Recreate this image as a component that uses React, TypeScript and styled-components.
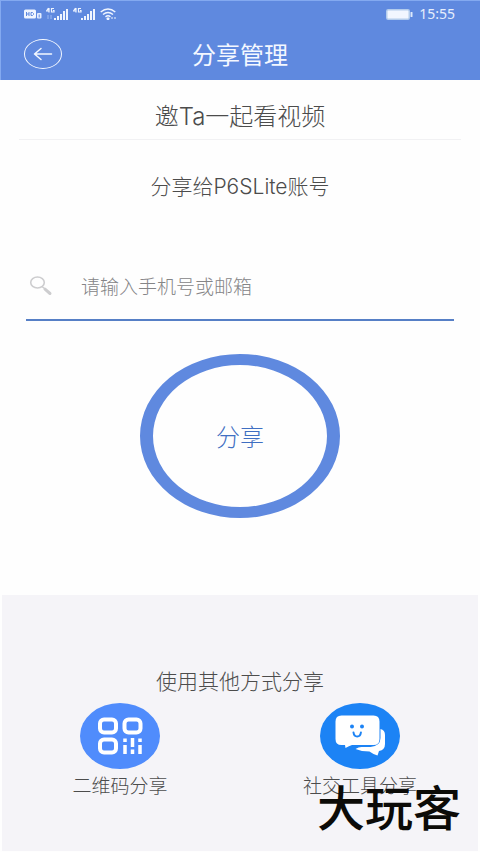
import React, { useState } from "react";
import styled, { createGlobalStyle } from "styled-components";

const blue = "#5f89df";

const GlobalStyle = createGlobalStyle`
  *, *::before, *::after { box-sizing: border-box; }
  body {
    margin: 0;
    background: #fefefe;
    font-family: "Noto Sans CJK SC", sans-serif;
    font-weight: 300;
    color: #4c4c4c;
  }
  button, input { font: inherit; color: inherit; }
`;

const Page = styled.div`
  position: relative;
  display: flex;
  flex-direction: column;
  min-height: 100vh;
`;

const Latin = styled.span`
  font-family: Inter, sans-serif;
  line-height: 1;
`;

const Header = styled.header`
  display: flex;
  flex-direction: column;
  height: 80px;
  background: ${blue};
  border-top: 1px solid #83a9f0;
  border-left: 1px solid #83a9f0;
  color: #f4f8ff;
`;

const StatusBar = styled.div`
  display: flex;
  justify-content: space-between;
  align-items: center;
  height: 26px;
  padding: 0 25px 0 23px;
`;

const StatusGroup = styled.div`
  display: flex;
  align-items: center;
  gap: 4px;
`;

const PowerGroup = styled(StatusGroup)`
  gap: 6px;
`;

const Clock = styled.time`
  font-family: "Noto Sans", sans-serif;
  font-size: 14px;
  line-height: 20px;
  font-weight: 400;
  color: #e6eefc;
`;

const TitleBar = styled.div`
  display: grid;
  grid-template-columns: 1fr auto 1fr;
  align-items: center;
  flex: 1;
  padding: 0 24px 0 23px;
`;

const BackButton = styled.button`
  display: flex;
  align-items: center;
  justify-content: center;
  width: 38px;
  height: 30px;
  padding: 0;
  border: 1px solid #f4f8ff;
  border-radius: 50%;
  background: none;
  cursor: pointer;
`;

const Title = styled.h1`
  margin: 0;
  font-size: 24px;
  line-height: 32px;
  font-weight: 400;
`;

const Main = styled.main`
  display: flex;
  flex-direction: column;
  align-items: center;
  padding-bottom: 77px;
`;

const Invite = styled.div`
  align-self: stretch;
  margin: 0 19px;
  padding: 20px 0 9px;
  border-bottom: 1px solid #f1f1f3;
  font-size: 24px;
  line-height: 30px;
  text-align: center;
`;

const Subtitle = styled.h2`
  margin: 31px 0 0;
  font-size: 21px;
  line-height: 28px;
  font-weight: 300;
`;

const Form = styled.form`
  align-self: stretch;
  display: flex;
  flex-direction: column;
  align-items: center;
  gap: 33px;
  margin: 53px 26px 0;
`;

const Field = styled.label`
  align-self: stretch;
  display: flex;
  align-items: center;
  gap: 28px;
  height: 69px;
  padding-left: 3px;
  border-bottom: 2px solid #567fc6;
`;

const AccountInput = styled.input`
  flex: 1;
  min-width: 0;
  height: 32px;
  padding: 0;
  border: 0;
  outline: 0;
  background: none;
  font-size: 19px;
  line-height: 28px;
  &::placeholder { color: #858587; opacity: 1; }
`;

const ShareButton = styled.button`
  width: 200px;
  height: 164px;
  border: solid ${blue};
  border-width: 11px 13px;
  border-radius: 50%;
  background: none;
  color: #3f6fc2;
  font-size: 24px;
  line-height: 32px;
  cursor: pointer;
`;

const Others = styled.section`
  flex: 1;
  margin: 0 2px 1px;
  padding: 71px 0 50px;
  background: #f5f4f8;
  text-align: center;
`;

const OthersTitle = styled.h2`
  margin: 0 0 9px;
  font-size: 21px;
  line-height: 28px;
  font-weight: 300;
`;

const Options = styled.div`
  display: grid;
  grid-template-columns: 1fr 1fr;
  margin: 0 -2px;
`;

const Option = styled.button`
  display: flex;
  flex-direction: column;
  align-items: center;
  gap: 3px;
  padding: 0;
  border: 0;
  background: none;
  font-size: 19px;
  line-height: 26px;
  cursor: pointer;
`;

const Badge = styled.span<{ $color: string }>`
  display: block;
  width: 80px;
  height: 66px;
  border-radius: 50%;
  background: ${(p) => p.$color};
`;

const Watermark = styled.div`
  position: absolute;
  right: 19px;
  bottom: 21px;
  font-size: 48px;
  line-height: 52px;
  font-weight: 500;
  color: #0c0b08;
  pointer-events: none;
`;

const Signal = ({ faint }: { faint?: boolean }) => (
  <svg width="23" height="14" viewBox="0 0 23 14" fill="#f0f5ff" aria-hidden="true">
    <path d="M2.500 1L.5 4h3M3 1v4.500M8 1.500H5.500v3.500H8V3.500H7" fill="none" stroke="#f0f5ff" strokeWidth="1.200" />
    {faint && <path d="M2 8v4M5 8v4" stroke="#9db9ef" />}
    <path d="M8 11h2v2H8zM11 9h2v4h-2zM14 7h2v6h-2zM17 4h2v9h-2zM20 2h2v11h-2z" />
  </svg>
);

const HdIcon = () => (
  <svg width="18" height="10" viewBox="0 0 18 10" aria-hidden="true">
    <rect y="0.500" width="12" height="9" rx="1.500" fill="#f0f5ff" />
    <path d="M2.500 3v4M5 3v4M2.500 5H5M7 3.500v3h1.500l1-1v-1l-1-1z" fill="none" stroke={blue} />
    <rect x="13" y="4" width="4.500" height="5.500" rx="1" fill="#e4edff" />
    <path d="M15.200 5.500v3" stroke={blue} />
  </svg>
);

const WifiIcon = () => (
  <svg width="17" height="12" viewBox="0 0 17 12" fill="none" stroke="#f0f5ff" strokeWidth="1.500" aria-hidden="true">
    <path d="M.7 4Q8 -2 15.300 4M3 6.500q5-4 10 0M5.500 8.800q2.500-2 5 0" />
    <path d="M7 10h2v1.500H7zM12 9v2M15 9v2" strokeWidth="1" fill="#f0f5ff" />
  </svg>
);

const BatteryIcon = () => (
  <svg width="27" height="11" viewBox="0 0 27 11" aria-hidden="true">
    <rect x=".75" y=".75" width="22.500" height="9.500" rx="1.500" fill="#f2f6ff" stroke="#b4ccec" strokeWidth="1.500" />
    <rect x="24.500" y="3" width="2" height="5" rx=".5" fill="#dce8fb" />
  </svg>
);

const ArrowIcon = () => (
  <svg width="20" height="14" viewBox="0 0 20 14" fill="none" stroke="#f4f8ff" strokeWidth="1.500" strokeLinecap="round" strokeLinejoin="round" aria-hidden="true">
    <path d="M18.500 7H1.500M8 1.500L1.500 7 8 12.500" />
  </svg>
);

const SearchIcon = () => (
  <svg width="24" height="20" viewBox="0 0 24 20" fill="none" stroke="#cdcdcf" strokeLinecap="round" aria-hidden="true">
    <ellipse cx="8.500" cy="6.500" rx="6.800" ry="5.500" strokeWidth="1.600" />
    <path d="M13.500 11l2 1.500" strokeWidth="1.500" />
    <path d="M16 13.200l5 4.300" strokeWidth="3" />
  </svg>
);

const QrIcon = () => (
  <svg width="80" height="66" viewBox="0 0 80 66" fill="none" stroke="#fff" aria-hidden="true">
    <g strokeWidth="4">
      <rect x="20" y="16.500" width="16" height="13" rx="4" />
      <rect x="44.500" y="16.500" width="16" height="13" rx="4" />
      <rect x="20" y="36.500" width="16" height="13" rx="4" />
    </g>
    <path d="M45 35.500v3.500M45 42v9M52.500 35v9M52.500 46.500v4.500M60 35.500v3.500M60 42v9" strokeWidth="3.500" />
  </svg>
);

const ChatIcon = () => (
  <svg width="80" height="66" viewBox="0 0 80 66" aria-hidden="true">
    <path d="M60.500 26q4.500 1 4.500 6v9q0 6-6 7l-1.500 4.500q-4-1-8-4-8 0-14-2.500 3-2 6-2h9q10-1 10-9z" fill="#fff" />
    <path d="M21.500 12.500h32q6 0 6 6v17.500q0 6-6 6H32q-3 1-6.500 3l-.5-3h-3.500q-6 0-6-6V18.500q0-6 6-6z" fill="#fff" />
    <circle cx="32" cy="23.500" r="2" fill="#1c83f5" />
    <circle cx="42" cy="23.500" r="2" fill="#1c83f5" />
    <path d="M33.500 29.500q.5 4 3.700 4t3.700-4" fill="none" stroke="#1c83f5" strokeWidth="2" strokeLinecap="round" />
  </svg>
);

export default function App() {
  const [account, setAccount] = useState("");
  return (
    <Page>
      <GlobalStyle />
      <Header>
        <StatusBar>
          <StatusGroup>
            <HdIcon />
            <Signal faint />
            <Signal />
            <WifiIcon />
          </StatusGroup>
          <PowerGroup>
            <BatteryIcon />
            <Clock>15:55</Clock>
          </PowerGroup>
        </StatusBar>
        <TitleBar>
          <BackButton type="button" aria-label="返回"><ArrowIcon /></BackButton>
          <Title>分享管理</Title>
        </TitleBar>
      </Header>
      <Main>
        <Invite>邀<Latin>Ta</Latin>一起看视频</Invite>
        <Subtitle>分享给<Latin>P6SLite</Latin>账号</Subtitle>
        <Form onSubmit={(e) => e.preventDefault()}>
          <Field>
            <SearchIcon />
            <AccountInput
              aria-label="手机号或邮箱"
              placeholder="请输入手机号或邮箱"
              value={account}
              onChange={(e) => setAccount(e.target.value)}
            />
          </Field>
          <ShareButton type="submit">分享</ShareButton>
        </Form>
      </Main>
      <Others>
        <OthersTitle>使用其他方式分享</OthersTitle>
        <Options>
          <Option type="button">
            <Badge $color="#508cfc"><QrIcon /></Badge>
            二维码分享
          </Option>
          <Option type="button">
            <Badge $color="#1c83f5"><ChatIcon /></Badge>
            社交工具分享
          </Option>
        </Options>
      </Others>
      <Watermark>大玩客</Watermark>
    </Page>
  );
}
